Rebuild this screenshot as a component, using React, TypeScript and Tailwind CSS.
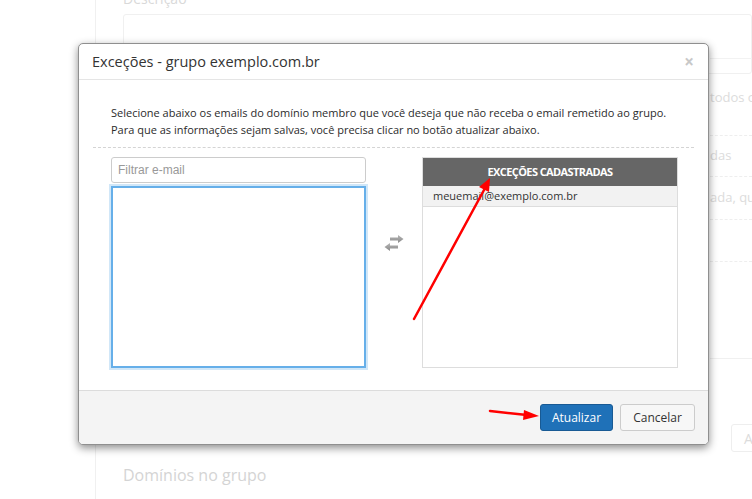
import React from "react";

const font = "font-['Open_Sans',_'Noto_Sans',_sans-serif]";

// Fundo da página (esmaecido atrás do modal)
const BackgroundPage: React.FC = () => (
  <div className={`relative h-[499px] w-[752px] overflow-hidden bg-white ${font}`}>
    <div className="ml-[95px] flex h-full flex-col border-l border-[#f0f0f0] pl-[27px]">
      <div className="-mt-[12px] text-[14px] text-[#d9d9d9]">Descrição</div>
      <div className="mt-[5px] h-[60px] rounded-[3px] border border-[#f0f0f0]" />
      <div className="ml-[587px] mt-[-16px] flex flex-col whitespace-nowrap text-[13px] text-[#dcdcdc]">
        <div className="h-[1px] bg-[#f2f2f2]" />
        <div className="flex h-[58px] items-center pt-[20px]">todos os</div>
        <div className="mt-[18px] border-t border-dashed border-[#eeeeee]" />
        <div className="flex h-[40px] items-center">das</div>
        <div className="border-t border-dashed border-[#eeeeee]" />
        <div className="flex h-[42px] items-center">ada, qua</div>
        <div className="border-t border-dashed border-[#eeeeee]" />
        <div className="h-[41px]" />
        <div className="border-t border-dashed border-[#eeeeee]" />
        <div className="h-[96px]" />
        <div className="border-t border-[#f0f0f0]" />
        <div className="ml-[21px] mt-[65px] h-[28px] w-[40px] rounded-[3px] border border-[#eeeeee] px-[12px] pt-[3px] text-[14px]">
          Ad
        </div>
      </div>
      <div className="mt-auto mb-[12px] text-[16px] text-[#d4d4d4]">Domínios no grupo</div>
    </div>
  </div>
);

const SwapIcon: React.FC = () => (
  <svg width="24" height="18" viewBox="0 0 24 18">
    <defs>
      <linearGradient id="g" x1="0" y1="0" x2="0" y2="1">
        <stop offset="0" stopColor="#b5b5b5" />
        <stop offset="1" stopColor="#8a8a8a" />
      </linearGradient>
    </defs>
    <path d="M8 3.5h8V1l5.5 4L16 9V6.5H8z" fill="url(#g)" />
    <path d="M16 11.5H8V9l-5.5 4L8 17v-2.5h8z" fill="url(#g)" />
  </svg>
);

const Modal: React.FC = () => (
  <div
    className={`absolute left-[78px] top-[43px] flex h-[402px] w-[631px] flex-col overflow-hidden rounded-[5px] border border-[#8f8f8f] bg-white shadow-[0_3px_9px_rgba(0,0,0,0.45)] ${font}`}
  >
    <div className="flex h-[36px] shrink-0 items-center justify-between border-b border-[#e5e5e5] pl-[13px] pr-[14px]">
      <span className="text-[14.5px] text-[#333]">Exceções - grupo exemplo.com.br</span>
      <span className="text-[17px] font-bold leading-none text-[#c8c8c8]">×</span>
    </div>

    <div className="flex-1 px-[14px] pt-[24px]">
      <div className="whitespace-nowrap pl-[18px] text-[11px] leading-[17px] text-[#2b2b2b]">
        <p>Selecione abaixo os emails do domínio membro que você deseja que não receba o email remetido ao grupo.</p>
        <p>Para que as informações sejam salvas, você precisa clicar no botão atualizar abaixo.</p>
      </div>
      <div className="mt-[9px] border-t border-dashed border-[#d4d4d4]" />

      <div className="mt-[9px] flex items-start pl-[18px]">
        <div className="flex w-[255px] flex-col">
          <div className="flex h-[26px] items-center rounded-[3px] border border-[#cccccc] px-[6px] font-['Liberation_Sans',_Arial,_sans-serif] text-[12px] text-[#999]">
            Filtrar e-mail
          </div>
          <div className="mt-[3px] h-[182px] border-2 border-[#66afe9] shadow-[0_0_0_2px_rgba(102,175,233,0.3)]" />
        </div>

        <div className="flex w-[56px] justify-center pt-[77px]">
          <SwapIcon />
        </div>

        <div className="flex h-[211px] w-[256px] flex-col border border-[#dddddd]">
          <div className="flex h-[28px] items-center justify-center bg-[#666666] text-[11px] font-bold tracking-[-0.6px] text-white">
            EXCEÇÕES CADASTRADAS
          </div>
          <div className="flex h-[21px] items-center border-b border-[#dddddd] bg-[#f2f2f2] px-[10px] text-[11px] text-[#333]">
            meuemail@exemplo.com.br
          </div>
        </div>
      </div>
    </div>

    <div className="flex h-[54px] shrink-0 items-center justify-end gap-[7px] border-t border-[#dcdcdc] bg-[#f4f4f4] pr-[13px]">
      <button className="h-[27px] w-[73px] rounded-[3px] border border-[#185a94] bg-[#1f71b8] text-[12px] text-white">
        Atualizar
      </button>
      <button className="h-[27px] w-[75px] rounded-[3px] border border-[#cccccc] bg-[#f7f7f7] text-[12px] text-[#333]">
        Cancelar
      </button>
    </div>
  </div>
);

// Setas vermelhas de anotação
const Arrows: React.FC = () => (
  <svg className="pointer-events-none absolute left-0 top-0" width="752" height="499">
    <line x1="414" y1="319" x2="484" y2="190" stroke="#ff0000" strokeWidth="2.5" strokeLinecap="round" />
    <polygon points="490,178 479,187 489,192" fill="#ff0000" />
    <line x1="490" y1="411" x2="527" y2="415" stroke="#ff0000" strokeWidth="2.5" strokeLinecap="round" />
    <polygon points="539,416 524,410 523,420" fill="#ff0000" />
  </svg>
);

export default function App() {
  return (
    <div className="relative h-[499px] w-[752px] overflow-hidden">
      <BackgroundPage />
      <Modal />
      <Arrows />
    </div>
  );
}
